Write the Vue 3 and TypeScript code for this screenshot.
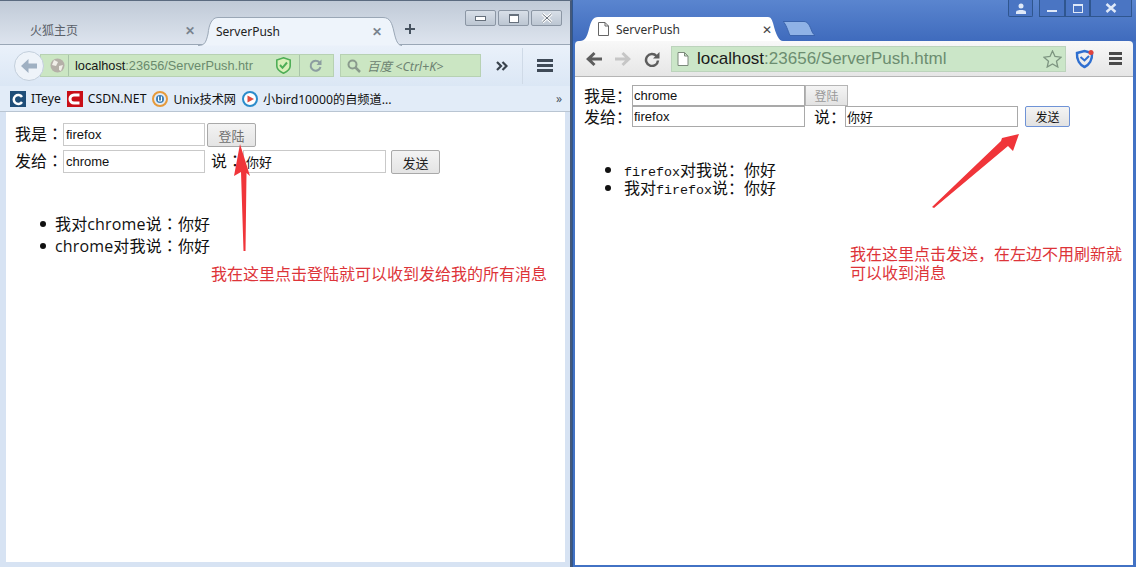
<script setup lang="ts">
const bookmarks = [
  { name: 'ITeye', key: 'iteye' },
  { name: 'CSDN.NET', key: 'csdn' },
  { name: 'Unix技术网', key: 'unix' },
  { name: '小bird10000的自频道...', key: 'bird' },
]
</script>

<template>
  <div class="page">
    <!-- firefox window -->
    <section class="ff">
      <header class="ff-tabs">
        <div class="ff-tab">
          <span class="ff-tab__title">火狐主页</span>
          <span class="ff-close">✕</span>
        </div>
        <div class="ff-tab ff-tab--active">
          <svg class="ff-tab__shape" width="204" height="29" viewBox="0 0 204 29">
            <path d="M0 28.500C7 28.500 8 25 10 17C11 7 14 .5 20 .5H185C192 .5 194 6 196 15C198 24 200 28.500 204 28.500" fill="#eef4fb" stroke="#9aa7b6" />
          </svg>
          <span class="ff-tab__title">ServerPush</span>
          <span class="ff-close">✕</span>
        </div>
        <svg class="ff-plus" width="12" height="12" viewBox="0 0 12 12"><path d="M6 1V11M1 6H11" stroke="#46525f" stroke-width="2" /></svg>
        <div class="ff-controls">
          <span class="ff-ctl"><i class="ff-ctl__min" /></span>
          <span class="ff-ctl"><i class="ff-ctl__max" /></span>
          <span class="ff-ctl"><svg width="12" height="10" viewBox="0 0 12 10"><path d="M1.500 1L10.500 9M10.500 1L1.500 9" stroke="#fff" stroke-width="3" /><path d="M1.500 1L10.500 9M10.500 1L1.500 9" stroke="#66707c" /></svg></span>
        </div>
      </header>

      <div class="ff-nav">
        <span class="ff-back">
          <svg width="16" height="14" viewBox="0 0 16 14"><path d="M7.500 0L0 7L7.500 14V9.500H16V4.500H7.500Z" fill="#9fb0c2" /></svg>
        </span>
        <div class="ff-url">
          <svg class="ff-globe" width="15" height="15" viewBox="0 0 15 15"><circle cx="7.500" cy="7.500" r="7" fill="#b5b0a8" /><path d="M4 2L8 4L6 8L2 7ZM9 8L13 7L11 13L9 12Z" fill="#f1efe9" /></svg>
          <span class="ff-url__text"><b>localhost</b>:23656/ServerPush.htr</span>
          <svg class="ff-shield" width="15" height="17" viewBox="0 0 15 17"><path d="M7.500 .8L14.200 3V9C14.200 12.500 10.800 14.800 7.500 16.200C4.200 14.800 .8 12.500 .8 9V3Z" fill="#d8f0b8" stroke="#4fae57" stroke-width="1.600" /><path d="M4 8L6.500 10.800L11 5.500" fill="none" stroke="#4fae57" stroke-width="2" /></svg>
          <svg class="ff-reload" width="13" height="13" viewBox="0 0 13 13"><path d="M10.500 3.500A5 5 0 1 0 11.500 8" fill="none" stroke="#8c9da0" stroke-width="2" /><path d="M12.500 .5V6H7.500Z" fill="#8c9da0" /></svg>
        </div>
        <div class="ff-search">
          <svg width="14" height="14" viewBox="0 0 14 14"><circle cx="5.500" cy="5.500" r="4" fill="none" stroke="#8a9a8d" stroke-width="2" /><path d="M8.500 8.500L13 13" stroke="#8a9a8d" stroke-width="2.500" /></svg>
          <em>百度 &lt;Ctrl+K&gt;</em>
        </div>
        <span class="ff-more">
          <svg width="12" height="10" viewBox="0 0 12 10"><path d="M1 1L5 5L1 9M6.500 1L10.500 5L6.500 9" fill="none" stroke="#39424c" stroke-width="2.200" /></svg>
        </span>
        <span class="ff-menu"><i /><i /><i /></span>
      </div>

      <div class="ff-marks">
        <span v-for="m in bookmarks" :key="m.key" class="ff-mark">
          <svg width="16" height="16" viewBox="0 0 16 16">
            <template v-if="m.key === 'iteye'">
              <rect width="16" height="16" fill="#1f4e79" />
              <path d="M12 6A4.500 4.500 0 1 0 12 11" fill="none" stroke="#fff" stroke-width="2.500" />
            </template>
            <template v-else-if="m.key === 'csdn'">
              <rect width="16" height="16" fill="#c90f17" />
              <path d="M12.500 4H7A4 4 0 0 0 7 12H12.500" fill="none" stroke="#fff" stroke-width="3" />
            </template>
            <template v-else-if="m.key === 'unix'">
              <circle cx="8" cy="8" r="7" fill="none" stroke="#e59a3b" stroke-width="2" />
              <circle cx="8" cy="8" r="4" fill="#3d7fb5" />
              <path d="M6.500 5.500V10H9.500V5.500" fill="none" stroke="#fff" />
            </template>
            <template v-else>
              <circle cx="8" cy="8" r="7" fill="#fff" stroke="#2b8ccb" stroke-width="2" />
              <path d="M5.500 4.500L12 8L5.500 11.500Z" fill="#e04a3f" />
            </template>
          </svg>
          {{ m.name }}
        </span>
        <span class="ff-marks__more">»</span>
      </div>

      <main class="ff-page">
        <div class="ff-row">
          <label>我是：</label>
          <input class="ff-input" value="firefox" />
          <button class="ff-btn ff-btn--off">登陆</button>
        </div>
        <div class="ff-row">
          <label>发给：</label>
          <input class="ff-input" value="chrome" />
          <label class="ff-say">说：</label>
          <input class="ff-input ff-input--msg" value="你好" />
          <button class="ff-btn ff-btn--send">发送</button>
        </div>
        <ul class="ff-list">
          <li>我对chrome说：你好</li>
          <li>chrome对我说：你好</li>
        </ul>
      </main>
    </section>

    <!-- chrome window -->
    <section class="cr">
      <header class="cr-tabs">
        <div class="cr-tab">
          <svg class="cr-tab__shape" width="203" height="24" viewBox="0 0 203 24">
            <path d="M0 24C5 24 7 20 9 12C11 4 13 0 18 0H188C191 0 192 3 193 6C196 18 199 24 203 24Z" fill="#fff" />
          </svg>
          <svg class="cr-doc" width="11" height="14" viewBox="0 0 11 14"><path d="M.5 .5H7L10.500 4V13.500H.5ZM7 .5V4H10.500" fill="#fff" stroke="#666" /></svg>
          <span class="cr-tab__title">ServerPush</span>
          <span class="cr-close">✕</span>
        </div>
        <svg class="cr-new" width="32" height="15" viewBox="0 0 32 15"><path d="M0 .5H21C24 .5 26 3 28 8C29 11 30 13 32 14.500H7C5 10 3 3 0 .5Z" fill="#8fb2e6" stroke="#3b64ac" /></svg>
        <div class="cr-controls">
          <span class="cr-ctl cr-ctl--user"><svg width="10" height="11" viewBox="0 0 10 11"><circle cx="5" cy="3" r="2.500" fill="#dfe9f8" /><path d="M0 11V8.500C1 6.500 9 6.500 10 8.500V11Z" fill="#dfe9f8" /></svg></span>
          <span class="cr-group">
            <span class="cr-ctl cr-ctl--min"><i class="cr-ctl__min" /></span>
            <span class="cr-ctl"><i class="cr-ctl__max" /></span>
            <span class="cr-ctl cr-ctl--close"><svg width="12" height="10" viewBox="0 0 12 10"><path d="M1.500 1L10.500 9M10.500 1L1.500 9" stroke="#dfe9f8" stroke-width="2.500" /></svg></span>
          </span>
        </div>
      </header>

      <div class="cr-bar">
        <svg width="16" height="14" viewBox="0 0 16 14"><path d="M16 5.500H6L9.500 2L7.500 0L0 7L7.500 14L9.500 12L6 8.500H16Z" fill="#5d5d5d" /></svg>
        <svg class="cr-fwd" width="16" height="14" viewBox="0 0 16 14"><path d="M0 5.500H10L6.500 2L8.500 0L16 7L8.500 14L6.500 12L10 8.500H0Z" fill="#c6c6c6" /></svg>
        <svg class="cr-reload" width="16" height="16" viewBox="0 0 16 16"><path d="M12.500 5A6 6 0 1 0 14 9.500" fill="none" stroke="#5d5d5d" stroke-width="2.500" /><path d="M15.500 1V7.500H9Z" fill="#5d5d5d" /></svg>
        <div class="cr-url">
          <svg width="12" height="14" viewBox="0 0 11 14"><path d="M.5 .5H7L10.500 4V13.500H.5ZM7 .5V4H10.500" fill="#fff" stroke="#7c8a7c" /></svg>
          <span class="cr-url__text"><b>localhost</b>:23656/ServerPush.html</span>
          <svg class="cr-star" width="19" height="18" viewBox="0 0 19 18"><path d="M9.500 1L12 6.500L18 7.200L13.500 11.200L14.800 17L9.500 14L4.200 17L5.500 11.200L1 7.200L7 6.500Z" fill="none" stroke="#7d9580" stroke-width="1.300" /></svg>
        </div>
        <svg class="cr-ext" width="20" height="20" viewBox="0 0 20 20"><path d="M2 4L9.500 2L17 4C17.500 11 14 16 9.500 18C5 16 1.500 11 2 4Z" fill="none" stroke="#2f6fd0" stroke-width="2.500" /><path d="M5.500 8L9.500 11.500L14 7" fill="none" stroke="#2f6fd0" stroke-width="2" /><circle cx="16" cy="3.500" r="2.500" fill="#e0443e" /></svg>
        <span class="cr-menu"><i /><i /><i /></span>
      </div>

      <main class="cr-page">
        <div class="cr-row">
          <label>我是：</label>
          <input class="cr-input" value="chrome" />
          <button class="cr-btn cr-btn--off">登陆</button>
        </div>
        <div class="cr-row">
          <label>发给：</label>
          <input class="cr-input" value="firefox" />
          <label class="cr-say">说：</label>
          <input class="cr-input" value="你好" />
          <button class="cr-btn cr-btn--send">发送</button>
        </div>
        <ul class="cr-list">
          <li><span class="latin">firefox</span>对我说：你好</li>
          <li>我对<span class="latin">firefox</span>说：你好</li>
        </ul>
      </main>
    </section>

    <!-- annotations drawn over both windows -->
    <svg class="arrows" width="1136" height="567" viewBox="0 0 1136 567">
      <path d="M240 144L250 176L246.500 173L245.500 251L243.500 251L241 172L234 176Z" fill="#f0353a" />
      <path d="M1019 134L1013 151L1008 146L934 208L932 207L1001 141L1002 138Z" fill="#f0353a" />
    </svg>
    <p class="note note--left">我在这里点击登陆就可以收到发给我的所有消息</p>
    <p class="note note--right">我在这里点击发送，在左边不用刷新就<br />可以收到消息</p>
  </div>
</template>

<style>
html, body { margin: 0; background: #fff; overflow: hidden; }
</style>

<style scoped>
.page { position: relative; display: flex; width: 1136px; height: 567px; overflow: hidden; font-family: "Noto Sans", "Noto Sans CJK SC", sans-serif; color: #111; }
i { display: block; }

/* firefox */
.ff { width: 572px; height: 567px; box-sizing: border-box; display: flex; flex-direction: column; padding-bottom: 5px; background: #d7e3f3; border-right: 2px solid #44597a; border-top: 1px solid #5b6b80; }
.ff-tabs { height: 44px; flex: none; box-sizing: border-box; display: flex; align-items: flex-end; background: linear-gradient(#c0cad7, #dde4ee); border-bottom: 1px solid #9aa7b6; padding-left: 7px; }
.ff-tab { position: relative; display: flex; align-items: center; height: 28px; width: 198px; box-sizing: border-box; padding: 0 10px 0 23px; font-size: 12px; color: #5a6068; }
.ff-tab__title { flex: 1; position: relative; }
.ff-close { position: relative; font-size: 12px; font-weight: 700; color: #79838e; }
.ff-tab--active { width: 190px; padding: 0 13px 0 11px; color: #222; margin-bottom: -1px; }
.ff-tab__shape { position: absolute; left: -7px; top: 0; }
.ff-plus { position: relative; margin: 0 0 9px 9px; }
.ff-controls { display: flex; gap: 2px; margin: 0 8px 18px auto; }
.ff-ctl { width: 31px; height: 16px; box-sizing: border-box; display: flex; align-items: center; justify-content: center; border: 1px solid #8b96a4; border-radius: 2px; background: linear-gradient(#d8dfe8, #bcc6d2); }
.ff-ctl__min { width: 9px; height: 3px; background: #fff; border: 1px solid #66707c; }
.ff-ctl__max { width: 8px; height: 6px; background: #fff; border: 1px solid #66707c; border-top-width: 2px; }

.ff-nav { height: 41px; flex: none; box-sizing: border-box; display: flex; align-items: center; padding: 0 20px 0 14px; background: linear-gradient(#eaf1fa, #dbe7f5); }
.ff-back { width: 28px; height: 28px; flex: none; display: flex; align-items: center; justify-content: center; border: 1px solid #c3cfdc; border-radius: 50%; background: #eef3f9; position: relative; z-index: 1; }
.ff-url { width: 294px; height: 23px; flex: none; margin-left: -4px; box-sizing: border-box; display: flex; align-items: center; background: #cbe6c3; border: 1px solid #b7d1b3; color: #6a8a6d; font: 12.750px "Liberation Sans", sans-serif; }
.ff-globe { margin-left: 9px; flex: none; }
.ff-url__text { width: 199px; flex: none; margin-left: 3px; padding-left: 6px; box-sizing: border-box; border-left: 1px solid #a9c4a8; white-space: nowrap; line-height: 21px; }
.ff-url__text b { font-weight: 400; color: #161616; }
.ff-shield { margin: 0 8px 0 auto; flex: none; }
.ff-reload { flex: none; padding-left: 9px; margin-right: 11px; border-left: 1px solid #a9c4a8; height: 21px; }
.ff-search { width: 141px; height: 23px; flex: none; margin-left: 6px; box-sizing: border-box; display: flex; align-items: center; gap: 6px; padding-left: 6px; background: #cbe6c3; border: 1px solid #b7d1b3; font-size: 12.500px; color: #6d8372; }
.ff-more { width: 41px; height: 36px; flex: none; display: flex; align-items: center; justify-content: center; border-right: 1px solid #cfdae7; }
.ff-menu { display: flex; flex-direction: column; gap: 2px; margin-left: 14px; }
.ff-menu i { width: 16px; height: 3px; background: #3f4a57; }

.ff-marks { height: 26px; flex: none; box-sizing: border-box; display: flex; align-items: center; padding: 0 10px; background: #e2ecf8; border-bottom: 1px solid #b9c5d2; font-size: 12.200px; position: relative; }
.ff-mark { display: flex; align-items: center; gap: 5px; margin-right: 6px; white-space: nowrap; }
.ff-marks__more { position: absolute; right: 8px; font-size: 12px; color: #4a5562; }

.ff-page { flex: 1; margin: 0 5px 0 6px; background: #fff; padding: 11px 0 0 9px; font-size: 16px; font-family: "Open Sans", "Noto Sans CJK TC", sans-serif; }
.ff-row { display: flex; align-items: flex-start; height: 24px; margin-bottom: 3px; line-height: 23px; }
.ff-row label { width: 48px; flex: none; }
.ff-input { width: 142px; height: 23px; box-sizing: border-box; border: 1px solid #c9c9c9; padding: 0 2px; font: 13px "Liberation Sans", "Noto Sans CJK SC", sans-serif; color: #111; }
.ff-input--msg { width: 143px; }
.ff-row label.ff-say { width: 32px; margin-left: 6px; }
.ff-btn { height: 24px; box-sizing: border-box; border: 1px solid #a9a9a9; border-radius: 2px; background: linear-gradient(#f3f3f3, #e4e4e4); font: 13px "Noto Sans CJK SC", sans-serif; padding: 0; }
.ff-btn--off { width: 49px; margin-left: 2px; color: #6f6f6f; }
.ff-btn--send { width: 49px; margin-left: 5px; color: #222; }
.ff-list { margin: 39px 0 0; padding: 0 0 0 25px; list-style: none; line-height: 22px; letter-spacing: .15px; }
.ff-list li { display: flex; align-items: center; }
.ff-list li::before { content: ""; width: 6px; height: 6px; margin-right: 9px; border-radius: 50%; background: #111; }

/* chrome */
.cr { width: 564px; height: 567px; box-sizing: border-box; display: flex; flex-direction: column; background: #4272c4; border-left: 1px solid #2f568f; }
.cr-tabs { height: 41px; flex: none; display: flex; align-items: flex-end; padding-left: 7px; background: linear-gradient(#5a85cf, #3f6bbd); position: relative; }
.cr-tab { position: relative; width: 203px; height: 24px; box-sizing: border-box; display: flex; align-items: center; padding: 0 11px 0 18px; font-size: 12px; color: #333; }
.cr-tab__shape { position: absolute; left: 0; top: 0; }
.cr-doc { position: relative; margin-right: 7px; flex: none; }
.cr-tab__title { position: relative; flex: 1; }
.cr-close { position: relative; font-size: 12px; color: #444; }
.cr-new { margin: 0 0 5px 0; }
.cr-controls { display: flex; margin: 0 4px 24px auto; gap: 6px; }
.cr-ctl { width: 25px; height: 17px; box-sizing: border-box; display: flex; align-items: center; justify-content: center; border: 1px solid #2f568f; border-top: 0; }
.cr-ctl--user { border-radius: 0 0 2px 2px; background: #4a75c3; }
.cr-group { display: flex; background: #4a75c3; border-radius: 0 0 2px 2px; }
.cr-ctl--min { width: 26px; }
.cr-ctl--close { width: 42px; }
.cr-ctl__min { width: 10px; height: 2px; margin-top: 5px; background: #dfe9f8; }
.cr-ctl__max { width: 8px; height: 6px; border: 1px solid #dfe9f8; border-top-width: 2px; }

.cr-bar { height: 36px; flex: none; margin: 0 3px 0 2px; box-sizing: border-box; display: flex; align-items: center; padding: 0 10px 0 11px; background: linear-gradient(#f8f8f8, #e6e6e6); border-bottom: 1px solid #b5b5b5; border-radius: 4px 4px 0 0; }
.cr-fwd { margin-left: 13px; flex: none; }
.cr-reload { margin-left: 13px; flex: none; }
.cr-url { width: 395px; height: 26px; margin-left: 11px; flex: none; box-sizing: border-box; display: flex; align-items: center; padding: 0 3px 0 5px; background: #cbe6c8; border: 1px solid #bcd3bc; font: 17px "Liberation Sans", sans-serif; color: #6b8d70; }
.cr-url__text { flex: 1; margin-left: 8px; white-space: nowrap; }
.cr-url__text b { font-weight: 400; color: #1a1a1a; }
.cr-ext { margin-left: 9px; flex: none; }
.cr-menu { display: flex; flex-direction: column; gap: 2px; margin-left: 14px; }
.cr-menu i { width: 13px; height: 3px; background: #4a4a4a; }

.cr-page { flex: 1; margin: 0 3px 2px 2px; background: #fff; padding: 8px 0 0 9px; font-size: 16px; font-family: "Noto Sans CJK SC", sans-serif; color: #111; }
.cr-row { display: flex; align-items: center; height: 21px; line-height: 19px; }
.cr-row label { width: 48px; flex: none; }
.cr-input { width: 173px; height: 21px; box-sizing: border-box; border: 1px solid #a9a9a9; padding: 0 1px 1px; font: 13px "Liberation Sans", "Noto Sans CJK SC", sans-serif; color: #111; }
.cr-row label.cr-say { width: 31px; margin-left: 9px; }
.cr-btn { height: 21px; box-sizing: border-box; font: 12px "Noto Sans CJK SC", sans-serif; padding: 0; border: 1px solid #b5b5b5; background: linear-gradient(#f4f4f4, #e2e2e2); }
.cr-btn--off { width: 43px; color: #9a9a9a; }
.cr-btn--send { width: 45px; margin-left: 7px; border: 1px solid #6f93d6; border-radius: 2px; color: #111; }
.cr-list { margin: 33px 0 0; padding: 0 0 0 40px; font-size: 16px; font-family: "Noto Sans CJK SC", sans-serif; }
.cr-list li { height: 18px; line-height: 18px; }
.latin { font-family: "Liberation Mono", monospace; font-size: 13.330px; }

/* annotations */
.arrows { position: absolute; left: 0; top: 0; pointer-events: none; }
.note { position: absolute; margin: 0; font-size: 16px; line-height: 19px; color: #dd3439; white-space: nowrap; font-family: "Noto Sans CJK SC", sans-serif; font-weight: 400; }
.note--left { left: 211px; top: 264px; }
.note--right { left: 850px; top: 244px; }
</style>
